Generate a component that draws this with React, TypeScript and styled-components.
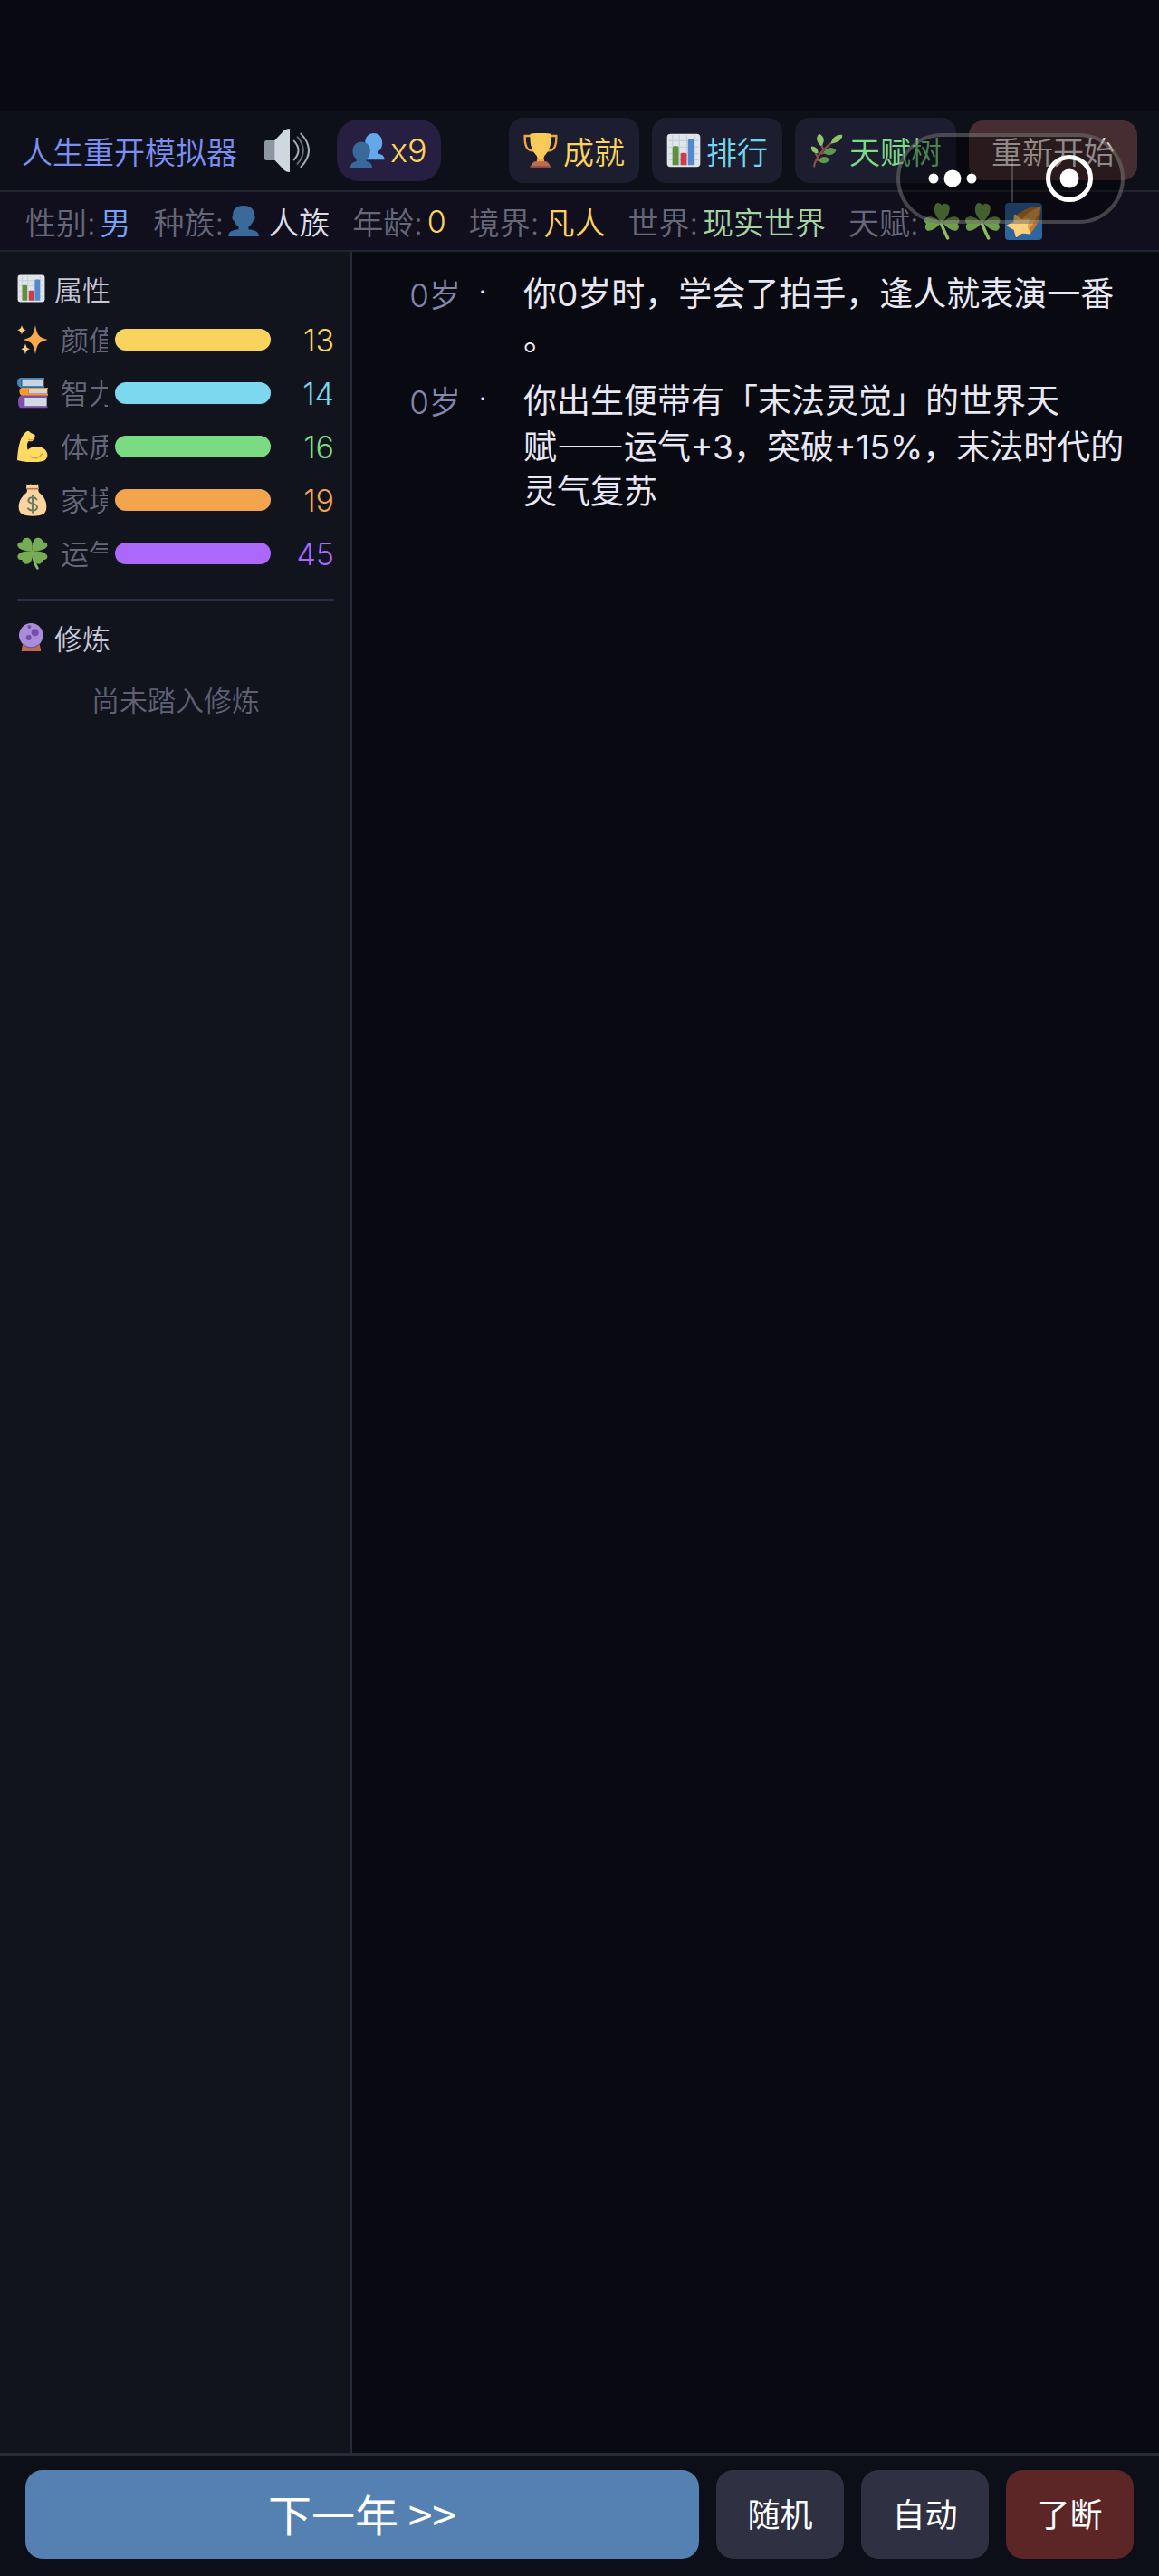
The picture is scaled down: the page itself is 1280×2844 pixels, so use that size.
import React from "react";
import styled, { createGlobalStyle } from "styled-components";

const GlobalStyle = createGlobalStyle`
  *, *::before, *::after { box-sizing: border-box; }
  body {
    margin: 0;
    background: #080911;
    color: #e8e8f4;
    font-family: Inter, "Noto Sans CJK SC", sans-serif;
    font-weight: 350;
    font-size: 34px;
  }
  button { font: inherit; border: 0; margin: 0; cursor: pointer; }
  h1, h2, p, dl, dd, ol, ul { margin: 0; padding: 0; font: inherit; list-style: none; }
`;

const Page = styled.div`
  position: relative;
  min-height: 100vh;
  display: flex;
  flex-direction: column;
  padding-top: 122px;
`;

const Header = styled.header`
  display: flex;
  align-items: center;
  height: 90px;
  padding: 0 24px;
  gap: 30px;
  background: #0d1018;
  border-bottom: 2px solid #222331;
  white-space: nowrap;
`;

const Title = styled.h1`
  font-size: 34px;
  color: #7b8ff2;
`;

const SoundButton = styled.button`
  display: flex;
  padding: 0;
  background: none;
`;

const Pill = styled.button`
  display: flex;
  align-items: center;
  gap: 6px;
  height: 68px;
  padding: 0 15px;
  border-radius: 24px;
  background: #261f42;
  color: #fbd45c;
  font-size: 36px;
`;

const HeaderActions = styled.nav`
  display: flex;
  align-items: center;
  gap: 14px;
  margin-left: auto;
`;

const HeaderButton = styled.button<{ $color: string }>`
  display: flex;
  align-items: center;
  gap: 6px;
  height: 72px;
  padding: 0 16px;
  border-radius: 16px;
  background: #1c1d2f;
  color: ${(p) => p.$color};
  white-space: nowrap;
`;

const RestartButton = styled(HeaderButton)`
  height: 66px;
  padding: 0 25px;
  background: #452d31;
`;

const Capsule = styled.div`
  position: absolute;
  z-index: 2;
  top: 147px;
  right: 38px;
  width: 252px;
  height: 100px;
  display: grid;
  grid-template-columns: 1fr 1fr;
  align-items: center;
  border: 4px solid rgba(255, 255, 255, 0.24);
  border-radius: 50px;
  background: rgba(0, 0, 0, 0.4);
`;

const CapsuleButton = styled.button`
  display: flex;
  align-items: center;
  justify-content: center;
  height: 52px;
  padding: 0 6px 0 0;
  background: none;
  & + & {
    padding: 0 0 0 4px;
    border-left: 3px solid rgba(255, 255, 255, 0.2);
  }
`;

const StatusBar = styled.dl`
  display: flex;
  align-items: center;
  gap: 25px;
  height: 66px;
  padding: 0 28px;
  background: #110f1d;
  border-bottom: 2px solid #222331;
  white-space: nowrap;
`;

const StatusItem = styled.div`
  display: flex;
  align-items: center;
  gap: 5px;
`;

const StatusLabel = styled.dt`
  color: #666779;
`;

const StatusValue = styled.dd<{ $color: string; $gap?: number }>`
  display: flex;
  align-items: center;
  gap: ${(p) => p.$gap ?? 0}px;
  color: ${(p) => p.$color};
`;

const Body = styled.div`
  flex: 1;
  display: flex;
`;

const Sidebar = styled.aside`
  flex: none;
  width: 389px;
  padding: 18px 17px 18px 19px;
  background: #11131d;
  border-right: 3px solid #282a39;
  font-size: 31px;
`;

const Section = styled.section`
  & + & {
    margin-top: 28px;
    padding-top: 17px;
    border-top: 3px solid #2b2d42;
  }
`;

const SectionTitle = styled.h2`
  display: flex;
  align-items: center;
  gap: 10px;
  height: 46px;
  padding-bottom: 2px;
  color: #c6c7d8;
`;

const StatList = styled.ul`
  display: flex;
  flex-direction: column;
  gap: 15px;
  padding-top: 11px;
`;

const StatRow = styled.li`
  display: flex;
  align-items: center;
  gap: 8px;
  height: 44px;
`;

const StatLabel = styled.span`
  width: 52px;
  margin-left: 6px;
  padding-bottom: 3px;
  overflow: hidden;
  white-space: nowrap;
  color: #666779;
`;

const StatBar = styled.span<{ $color: string }>`
  flex: 1;
  height: 24px;
  border-radius: 12px;
  background: ${(p) => p.$color};
`;

const StatValue = styled.span<{ $color: string }>`
  width: 62px;
  text-align: right;
  font-size: 34px;
  color: ${(p) => p.$color};
`;

const EmptyNote = styled.p`
  padding: 24px 0;
  text-align: center;
  line-height: 46px;
  color: #5f6072;
`;

const Log = styled.ol`
  flex: 1;
  min-width: 0;
  display: flex;
  flex-direction: column;
  gap: 20px;
  padding: 22px 36px 22px 60px;
`;

const LogEntry = styled.li`
  display: grid;
  grid-template-columns: 60px 48px 1fr;
  line-height: 49px;
  font-size: 37px;
`;

const LogAge = styled.span`
  text-align: right;
  font-size: 35px;
  line-height: 52px;
  color: #8486ad;
`;

const LogDot = styled.span`
  text-align: center;
  font-size: 34px;
  line-height: 44px;
`;

const LogText = styled.p`
  padding-left: 21px;
  font-weight: 400;
`;

const Keep = styled.span`
  font-family: "Noto Sans CJK SC", sans-serif;
  white-space: nowrap;
`;

const Footer = styled.footer`
  display: flex;
  gap: 19px;
  padding: 16px 28px 19px;
  background: #0c0f17;
  border-top: 3px solid #2a2b39;
`;

const FooterButton = styled.button<{ $bg: string }>`
  width: 141px;
  height: 98px;
  padding: 0 0 4px;
  border-radius: 19px;
  background: ${(p) => p.$bg};
  color: #fff;
  font-family: "Noto Sans CJK SC", sans-serif;
  font-size: 36px;
  font-weight: 400;
`;

const NextButton = styled(FooterButton)`
  flex: 1;
  font-size: 48px;
`;

type IconProps = { size?: number };

const SpeakerIcon = () => (
  <svg width="50" height="48" viewBox="0 0 150 144" aria-hidden="true">
    <rect x="0" y="39" width="42" height="66" rx="7" fill="#8b98a4" />
    <path d="M34 39 L66 5 Q72 0 84 0 V144 Q72 144 66 138 L34 104Z" fill="#cfd7df" />
    <g fill="none" stroke="#a1abb5" strokeWidth="6" strokeLinecap="round">
      <path d="M98 41 Q127 72 98 103" />
      <path d="M110 28 Q147 72 110 116" opacity="0.6" />
      <path d="M121 17 Q173 72 121 127" />
    </g>
  </svg>
);

const BustsIcon = () => (
  <svg width="38" height="38" viewBox="0 0 108 108" aria-hidden="true">
    <path
      d="M73 0C91 0 100 14 100 31C100 43 95 52 88 57V64C100 67 107 72 107 83H42C42 70 48 66 58 64V57C50 51 46 42 46 31C46 12 57 0 73 0Z"
      fill="#62a8ea"
    />
    <path
      d="M35 27C52 27 62 39 62 57C62 69 57 76 50 81V88C62 91 68 96 68 108H0C0 96 7 91 19 88V81C11 75 7 68 7 57C7 39 18 27 35 27Z"
      fill="#38699a"
    />
  </svg>
);

const PersonIcon = ({ size = 34 }: IconProps) => (
  <svg width={size} height={size} viewBox="0 0 100 100" aria-hidden="true">
    <path
      d="M50 0C75 0 86 14 85 34C89 36 87 46 82 48C79 58 73 65 66 69V77C86 79 99 84 100 100H0C1 84 14 79 34 77V69C27 65 21 58 18 48C13 46 11 36 15 34C14 14 25 0 50 0Z"
      fill="#3a6a9b"
    />
  </svg>
);

const TrophyIcon = () => (
  <svg width="38" height="38" viewBox="0 0 112 112" aria-hidden="true">
    <path
      d="M25 9H5Q3 57 30 57H40M87 9H107Q109 57 82 57H72"
      fill="none"
      stroke="#f2a644"
      strokeWidth="7"
    />
    <path d="M48 70H64L70 97H42Z" fill="#f0a53f" />
    <path d="M22 2Q56 -3 90 2Q92 46 77 63Q68 72 64 84H48Q44 72 35 63Q20 46 22 2Z" fill="#fbcb59" />
    <path d="M36 92H76Q84 97 89 111H22Q27 97 36 92Z" fill="#b96b55" />
    <path d="M22 107H89V112H22Z" fill="#8d4940" />
  </svg>
);

const ChartIcon = ({ size = 38 }: IconProps) => (
  <svg width={size} height={size} viewBox="0 0 112 112" aria-hidden="true">
    <rect x="2" y="2" width="108" height="108" rx="11" fill="#dfe5ea" />
    <path d="M8 24H104M8 45H104M8 66H104M8 87H104M20 6V104M42 6V104M66 6V104M92 6V104" stroke="#c3ccd4" strokeWidth="3" />
    <path d="M20 104V47Q20 42 25 42H35Q40 42 40 47V104Z" fill="#5c913b" />
    <path d="M46 104V69Q46 64 51 64H61Q66 64 66 69V104Z" fill="#cf3c49" />
    <path d="M70 104V25Q70 20 75 20H86Q91 20 91 25V104Z" fill="#5389cf" />
  </svg>
);

const HerbIcon = () => (
  <svg width="38" height="38" viewBox="0 0 112 112" aria-hidden="true">
    <path d="M15 108C20 80 38 55 82 24M27 78Q20 68 18 58M46 54Q40 46 40 34M38 66Q56 64 66 60M25 88H42" fill="none" stroke="#8a5248" strokeWidth="6" strokeLinecap="round" />
    <g fill="#8fc26b">
      <path d="M37 42C17 24 24 7 32 2C46 8 54 27 37 42Z" />
      <path d="M70 33C74 13 91 3 107 6C108 19 92 34 70 33Z" />
      <path d="M28 66C8 66 4 53 6 43C20 43 29 51 28 66Z" />
    </g>
    <g fill="#5f9650">
      <path d="M45 62C55 46 73 41 87 56C80 73 59 77 45 62Z" />
      <path d="M29 89C38 73 56 73 66 86C56 101 40 101 29 89Z" />
    </g>
  </svg>
);

const ShamrockIcon = () => (
  <svg width="41" height="41" viewBox="0 0 120 120" aria-hidden="true">
    <path d="M57 66Q66 90 78 114" fill="none" stroke="#8dbc63" strokeWidth="10" strokeLinecap="round" />
    <g fill="#6f9f4b">
      <path d="M59 65C38 44 29 25 38 5C45 -4 54 1 59 7C67 -1 77 1 83 9C88 30 74 48 59 65Z" />
      <path d="M57 64C35 43 16 40 5 50C0 59 5 64 9 67C1 76 6 86 13 90C31 91 45 78 57 64Z" />
      <path d="M61 64C83 43 102 40 113 50C119 59 114 64 110 67C118 76 113 86 105 90C88 91 73 78 61 64Z" />
    </g>
  </svg>
);

const MeteorIcon = () => (
  <svg width="41" height="41" viewBox="0 0 120 120" aria-hidden="true">
    <rect width="120" height="120" rx="12" fill="#2f659e" />
    <path d="M29 48C50 24 83 11 116 12C117 45 103 75 82 99L58 78Z" fill="#c77a25" />
    <path d="M55 52C72 34 91 20 116 12C107 43 93 66 78 84Z" fill="#e8a04c" />
    <path
      d="M32 40L52 56L76 54L69 76L80 98L55 95L37 108L31 86L9 73L30 64Z"
      fill="#ffd17b"
      stroke="#ffd17b"
      strokeWidth="6"
      strokeLinejoin="round"
    />
  </svg>
);

const SparklesIcon = () => (
  <svg width="34" height="34" viewBox="0 0 102 102" aria-hidden="true">
    <path d="M60 3C66 37 72 44 101 51C72 58 66 65 60 99C54 65 48 58 20 51C48 44 54 37 60 3Z" fill="#f9a94c" />
    <path d="M15 3C18 14 20 16 30 19C20 22 18 24 15 35C12 24 10 22 0 19C10 16 12 14 15 3Z" fill="#ffd17d" />
    <path d="M27 64C30 76 32 79 42 82C32 85 30 88 27 100C24 88 22 85 13 82C22 79 24 76 27 64Z" fill="#ffd17d" />
  </svg>
);

const BooksIcon = () => (
  <svg width="34" height="34" viewBox="0 0 102 102" aria-hidden="true">
    <path d="M10 0H90V5H14V27H90V32H10Q0 28 0 16Q0 3 10 0Z" fill="#3f88c4" />
    <rect x="16" y="5" width="72" height="22" fill="#c9d6e0" />
    <path d="M14 33H102V38H38V53H102V59H14Q7 55 7 46Q7 36 14 33Z" fill="#f39a34" />
    <rect x="38" y="38" width="62" height="15" fill="#dcd3cf" />
    <path d="M10 60H100V66H28V94H100V100H10Q3 96 3 80Q3 64 10 60Z" fill="#7d4fb0" />
    <rect x="25" y="66" width="73" height="28" fill="#d3d9e2" />
  </svg>
);

const MuscleIcon = () => (
  <svg width="34" height="34" viewBox="0 0 102 102" aria-hidden="true">
    <path
      d="M0 96C2 60 7 25 26 5C32 -2 41 -1 44 5L58 12C61 18 57 21 54 22C56 31 50 36 38 33C31 40 32 50 35 62C48 48 77 48 91 60C105 73 103 93 86 99C58 106 27 103 0 96Z"
      fill="#ffdb63"
    />
    <path d="M44 84Q66 99 82 75M39 27Q43 31 51 28" fill="none" stroke="#e79a31" strokeWidth="4" strokeLinecap="round" />
  </svg>
);

const MoneyBagIcon = () => (
  <svg width="34" height="36" viewBox="0 0 102 108" aria-hidden="true">
    <path d="M32 1L38 5L44 1L50 5L56 1L62 5L69 1L71 16C69 24 70 27 74 31C91 45 98 62 97 79C96 101 83 107 51 107C18 107 6 99 5 79C4 60 14 43 30 31C34 26 34 20 30 14Z" fill="#fbd59d" />
    <path d="M33 17H69" stroke="#b9724e" strokeWidth="5" />
    <path d="M64 52C59 44 39 43 37 55C36 69 65 62 66 77C66 91 43 92 36 82M51 38V95" fill="none" stroke="#6e7a68" strokeWidth="6" strokeLinecap="round" />
  </svg>
);

const CloverIcon = () => (
  <svg width="34" height="36" viewBox="0 0 102 108" aria-hidden="true">
    <path d="M50 48Q55 85 67 103" fill="none" stroke="#8dbd63" strokeWidth="8" strokeLinecap="round" />
    <g fill="#76ac54">
      <path d="M50 46C28 46 6 43 1 29C0 18 9 16 16 17C17 4 28 0 38 3C51 10 51 29 50 46Z" />
      <path d="M50 46C72 46 94 43 100 29C101 18 92 16 85 17C84 4 73 0 63 3C50 10 50 29 50 46Z" />
      <path d="M50 45C28 46 6 49 1 62C0 73 9 76 16 75C17 88 28 91 38 88C51 81 51 62 50 45Z" />
      <path d="M50 45C72 46 94 49 100 62C101 73 92 76 85 75C84 88 73 91 63 88C50 81 50 62 50 45Z" />
    </g>
  </svg>
);

const CrystalIcon = () => (
  <svg width="31" height="31" viewBox="0 0 93 93" aria-hidden="true">
    <path d="M18 70H74L79 93H14Z" fill="#bd6a50" />
    <circle cx="46" cy="40" r="40" fill="#aa8dd8" />
    <path d="M15 66Q46 91 77 66Q66 82 46 82Q26 82 15 66Z" fill="#704e9b" />
    <g fill="#744eaa">
      <circle cx="59" cy="31" r="12" />
      <circle cx="38" cy="48" r="9" />
      <circle cx="40" cy="12" r="6" />
    </g>
  </svg>
);

const MoreIcon = () => (
  <svg width="54" height="20" viewBox="0 0 54 20" fill="#fff" aria-hidden="true">
    <circle cx="6" cy="10" r="5.5" />
    <circle cx="27" cy="10" r="9.5" />
    <circle cx="48" cy="10" r="5.5" />
  </svg>
);

const TargetIcon = () => (
  <svg width="52" height="52" viewBox="0 0 52 52" aria-hidden="true">
    <circle cx="26" cy="26" r="23.5" fill="none" stroke="#fff" strokeWidth="5" />
    <circle cx="26" cy="26" r="10.5" fill="#fff" />
  </svg>
);

const stats = [
  { label: "颜值", value: 13, color: "#f8d35e", icon: <SparklesIcon /> },
  { label: "智力", value: 14, color: "#7cd8ee", icon: <BooksIcon /> },
  { label: "体质", value: 16, color: "#7bdb83", icon: <MuscleIcon /> },
  { label: "家境", value: 19, color: "#f2a54d", icon: <MoneyBagIcon /> },
  { label: "运气", value: 45, color: "#ab68fb", icon: <CloverIcon /> },
];

const events = [
  { age: 0, text: <>你0岁时，学会了拍手，逢人就表演一番<wbr />。</> },
  {
    age: 0,
    text: (
      <>
        你出生便带有「末法灵觉」的世界天<wbr />
        <Keep>赋——</Keep>运气+3，突破+15%，末法时代的灵气复苏
      </>
    ),
  },
];

export default function App() {
  return (
    <>
      <GlobalStyle />
      <Page lang="zh-CN">
        <Header>
          <Title>人生重开模拟器</Title>
          <SoundButton aria-label="声音"><SpeakerIcon /></SoundButton>
          <Pill><BustsIcon />x9</Pill>
          <HeaderActions>
            <HeaderButton $color="#fbd45c"><TrophyIcon />成就</HeaderButton>
            <HeaderButton $color="#72d5ee"><ChartIcon />排行</HeaderButton>
            <HeaderButton $color="#7bdd87"><HerbIcon />天赋树</HeaderButton>
            <RestartButton $color="#f1e8e8">重新开始</RestartButton>
          </HeaderActions>
        </Header>

        <Capsule>
          <CapsuleButton aria-label="更多"><MoreIcon /></CapsuleButton>
          <CapsuleButton aria-label="关闭"><TargetIcon /></CapsuleButton>
        </Capsule>

        <StatusBar>
          <StatusItem>
            <StatusLabel>性别:</StatusLabel>
            <StatusValue $color="#76a6fb">男</StatusValue>
          </StatusItem>
          <StatusItem>
            <StatusLabel>种族:</StatusLabel>
            <StatusValue $color="#dcdce4" $gap={10}><PersonIcon />人族</StatusValue>
          </StatusItem>
          <StatusItem>
            <StatusLabel>年龄:</StatusLabel>
            <StatusValue $color="#fbd45c">0</StatusValue>
          </StatusItem>
          <StatusItem>
            <StatusLabel>境界:</StatusLabel>
            <StatusValue $color="#fbd45c">凡人</StatusValue>
          </StatusItem>
          <StatusItem>
            <StatusLabel>世界:</StatusLabel>
            <StatusValue $color="#a5d3a2">现实世界</StatusValue>
          </StatusItem>
          <StatusItem>
            <StatusLabel>天赋:</StatusLabel>
            <StatusValue $color="#a5d3a2" $gap={4}>
              <ShamrockIcon />
              <ShamrockIcon />
              <MeteorIcon />
            </StatusValue>
          </StatusItem>
        </StatusBar>

        <Body>
          <Sidebar>
            <Section>
              <SectionTitle><ChartIcon size={31} />属性</SectionTitle>
              <StatList>
                {stats.map((s) => (
                  <StatRow key={s.label}>
                    {s.icon}
                    <StatLabel>{s.label}</StatLabel>
                    <StatBar $color={s.color} />
                    <StatValue $color={s.color}>{s.value}</StatValue>
                  </StatRow>
                ))}
              </StatList>
            </Section>
            <Section>
              <SectionTitle><CrystalIcon />修炼</SectionTitle>
              <EmptyNote>尚未踏入修炼</EmptyNote>
            </Section>
          </Sidebar>

          <Log>
            {events.map((e, i) => (
              <LogEntry key={i}>
                <LogAge>{e.age}岁</LogAge>
                <LogDot>·</LogDot>
                <LogText>{e.text}</LogText>
              </LogEntry>
            ))}
          </Log>
        </Body>

        <Footer>
          <NextButton $bg="#5581b2">下一年 &gt;&gt;</NextButton>
          <FooterButton $bg="#303043">随机</FooterButton>
          <FooterButton $bg="#303043">自动</FooterButton>
          <FooterButton $bg="#5c2626">了断</FooterButton>
        </Footer>
      </Page>
    </>
  );
}
